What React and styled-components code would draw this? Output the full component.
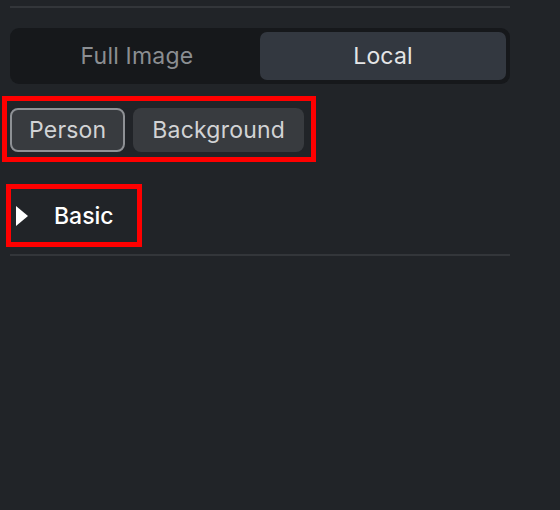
import React, { useState } from "react";
import styled, { createGlobalStyle } from "styled-components";

const GlobalStyle = createGlobalStyle`
  html, body {
    margin: 0;
    padding: 0;
    background: #212428;
  }
  body {
    font-family: Inter, "Noto Sans", sans-serif;
  }
`;

const Panel = styled.div`
  width: 560px;
  height: 510px;
  box-sizing: border-box;
  padding: 6px 50px 0 10px;
  display: flex;
  flex-direction: column;
`;

const Divider = styled.div`
  height: 2px;
  background: #33363a;
  margin-top: ${(p) => p.$top || 0}px;
`;

const Segmented = styled.div`
  margin-top: 20px;
  height: 56px;
  box-sizing: border-box;
  padding: 4px;
  border-radius: 9px;
  background: #16181b;
  display: grid;
  grid-template-columns: 1fr 1fr;
`;

const Segment = styled.button`
  border: none;
  border-radius: 7px;
  background: ${(p) => (p.$active ? "#333840" : "transparent")};
  color: ${(p) => (p.$active ? "#e4e5e7" : "#8b8e92")};
  font-family: inherit;
  font-size: 23px;
  letter-spacing: 0.2px;
  cursor: pointer;
  padding: 0;
`;

const Highlight = styled.div`
  border: 5px solid #ff0000;
  box-sizing: border-box;
  display: flex;
  align-items: center;
  align-self: flex-start;
`;

const ChipBox = styled(Highlight)`
  margin-top: 12px;
  margin-left: -8px;
  padding: 7px 7px 5px 3px;
  gap: 8px;
`;

const Chip = styled.button`
  height: 44px;
  box-sizing: border-box;
  padding: 0 ${(p) => (p.$selected ? 17 : 19)}px;
  border-radius: 8px;
  border: ${(p) => (p.$selected ? "2px solid #8e9195" : "none")};
  background: #383b3f;
  color: #d2d3d5;
  font-family: inherit;
  font-size: 23px;
  letter-spacing: 0.2px;
  cursor: pointer;
`;

const SectionBox = styled(Highlight)`
  margin-top: 22px;
  margin-left: -4px;
  width: 136px;
  height: 63px;
  padding-left: 4px;
  gap: 25px;
`;

const Caret = styled.svg`
  width: 14px;
  height: 20px;
  flex-shrink: 0;
`;

const SectionTitle = styled.span`
  color: #ffffff;
  font-size: 23px;
  font-weight: 500;
`;

export default function App() {
  const [mode, setMode] = useState("local");
  const [target, setTarget] = useState("person");

  return (
    <>
      <GlobalStyle />
      <Panel>
        <Divider />
        <Segmented>
          <Segment $active={mode === "full"} onClick={() => setMode("full")}>
            Full Image
          </Segment>
          <Segment $active={mode === "local"} onClick={() => setMode("local")}>
            Local
          </Segment>
        </Segmented>
        <ChipBox>
          <Chip $selected={target === "person"} onClick={() => setTarget("person")}>
            Person
          </Chip>
          <Chip $selected={target === "background"} onClick={() => setTarget("background")}>
            Background
          </Chip>
        </ChipBox>
        <SectionBox>
          <Caret viewBox="0 0 14 20">
            <path d="M1 0 L13 10 L1 20 Z" fill="#ffffff" />
          </Caret>
          <SectionTitle>Basic</SectionTitle>
        </SectionBox>
        <Divider $top={7} />
      </Panel>
    </>
  );
}
